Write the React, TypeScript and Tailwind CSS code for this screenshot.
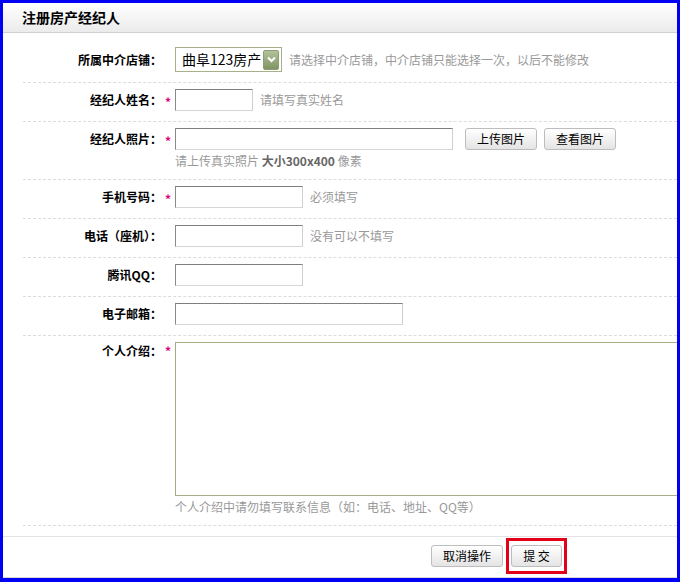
import React from 'react'

const font = { fontFamily: '"Noto Sans CJK SC", "Liberation Sans", sans-serif' }

function Star() {
  return <span className="text-[#e4007f] text-[12px] font-bold leading-none pl-[3px] pt-[3px]">*</span>
}

function Input({ w }: { w: string }) {
  return (
    <input
      className={`${w} block h-[22px] bg-white border border-t-[#7f7f7f] border-l-[#8a8a8a] border-r-[#cfcfcf] border-b-[#d6d6d6] outline-none`}
    />
  )
}

function Btn({ children, w }: { children: React.ReactNode; w: string }) {
  return (
    <button className={`${w} block h-[22px] text-[12px] text-black rounded-[3px] border border-[#bdbdbd] bg-gradient-to-b from-white to-[#e4e4e4] leading-none`}>
      {children}
    </button>
  )
}

function Row({
  label,
  req,
  children,
  top = false,
  pb = 'pb-[10px]',
  h = 'h-[22px]',
}: {
  label: string
  req?: boolean
  children: React.ReactNode
  top?: boolean
  pb?: string
  h?: string
}) {
  return (
    <div className={`ml-[20px] pt-[6px] ${pb} border-b border-dashed border-[#dcdcdc] flex`}>
      <div className={`w-[139px] flex justify-end text-[12px] font-bold text-black ${h} ${top ? 'items-start' : 'items-center'}`}>
        {label}
      </div>
      <div className={`w-[13px] flex ${h} ${top ? 'items-start' : 'items-center'}`}>{req && <Star />}</div>
      <div className="flex-1 min-w-0">{children}</div>
    </div>
  )
}

function Hint({ children }: { children: React.ReactNode }) {
  return <span className="text-[12px] text-[#999] ml-[7px] whitespace-nowrap">{children}</span>
}

export default function App() {
  return (
    <div className="w-[680px] h-[582px] bg-[#0000f2] pl-[3px] pt-[3px] pr-[3px] pb-[4px]" style={font}>
      <div className="w-[674px] h-[575px] bg-white overflow-hidden flex flex-col">
        {/* 标题 */}
        <div className="h-[30px] shrink-0 bg-gradient-to-b from-white to-[#ebebeb] border-b border-[#cfcfcf] flex items-center pl-[19px]">
          <span className="text-[14px] font-bold text-black">注册房产经纪人</span>
        </div>

        <div className="pt-[8px] shrink-0">
          <Row label="所属中介店铺：" h="h-[25px]">
            <div className="flex items-center h-[25px]">
              <div className="w-[107px] h-[25px] border border-[#a8b08a] flex items-center justify-between pl-[6px] pr-[2px]">
                <span className="text-[14px] text-black">曲阜123房产</span>
                <div className="w-[16px] h-[20px] rounded-[2px] bg-gradient-to-b from-[#b4c39a] to-[#7f9462] border border-[#8d9c77] flex items-center justify-center">
                  <svg width="9" height="7" viewBox="0 0 9 7">
                    <path d="M1 1.5 L4.5 5 L8 1.5" stroke="white" strokeWidth="2" fill="none" />
                  </svg>
                </div>
              </div>
              <Hint>请选择中介店铺，中介店铺只能选择一次，以后不能修改</Hint>
            </div>
          </Row>

          <Row label="经纪人姓名：" req>
            <div className="flex items-center h-[22px]">
              <Input w="w-[78px]" />
              <Hint>请填写真实姓名</Hint>
            </div>
          </Row>

          <Row label="经纪人照片：" req pb="pb-[9px]">
            <div className="flex items-center h-[22px]">
              <Input w="w-[278px]" />
              <div className="ml-[12px] flex gap-[7px]">
                <Btn w="w-[72px]">上传图片</Btn>
                <Btn w="w-[72px]">查看图片</Btn>
              </div>
            </div>
            <div className="mt-[2px] h-[18px] leading-[18px] text-[12px] text-[#999]">
              请上传真实照片 <b className="text-[#666]">大小300x400</b> 像素
            </div>
          </Row>

          <Row label="手机号码：" req>
            <div className="flex items-center h-[22px]">
              <Input w="w-[128px]" />
              <Hint>必须填写</Hint>
            </div>
          </Row>

          <Row label="电话（座机）：">
            <div className="flex items-center h-[22px]">
              <Input w="w-[128px]" />
              <Hint>没有可以不填写</Hint>
            </div>
          </Row>

          <Row label="腾讯QQ：">
            <Input w="w-[128px]" />
          </Row>

          <Row label="电子邮箱：">
            <Input w="w-[228px]" />
          </Row>

          <Row label="个人介绍：" req top pb="pb-[9px]" h="h-[18px]">
            <textarea className="block w-[520px] h-[154px] border border-[#a5ad86] resize-none outline-none" />
            <div className="mt-[2px] h-[18px] leading-[18px] text-[12px] text-[#999]">
              个人介绍中请勿填写联系信息（如：电话、地址、QQ等）
            </div>
          </Row>
        </div>

        {/* 底部按钮 */}
        <div className="mt-[10px] shrink-0 border-t border-[#e3e3e3] pt-[1px] h-[42px] border-b border-b-[#d8d8d8] flex justify-end items-start pr-[110px]">
          <div className="flex items-center gap-[3px]">
            <Btn w="w-[72px]">取消操作</Btn>
            <div className="border-[3px] border-[#e3001b] px-[2px] py-[4px]">
              <Btn w="w-[51px]">提 交</Btn>
            </div>
          </div>
        </div>
      </div>
    </div>
  )
}
